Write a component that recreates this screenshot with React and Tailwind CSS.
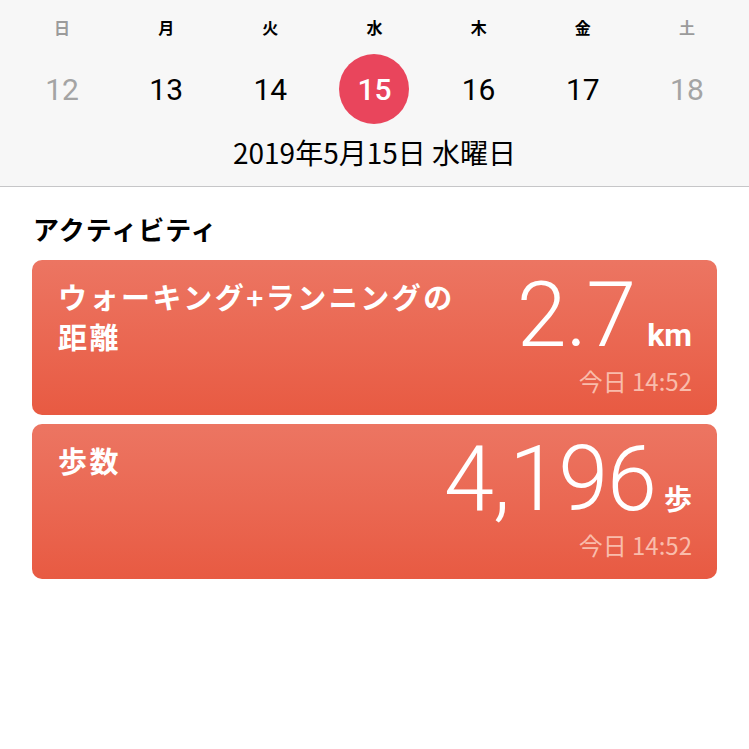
import * as React from 'react';

const DAYS = [
  { w: '日', d: '12', muted: true },
  { w: '月', d: '13' },
  { w: '火', d: '14' },
  { w: '水', d: '15', today: true },
  { w: '木', d: '16' },
  { w: '金', d: '17' },
  { w: '土', d: '18', muted: true },
];

const JP = { fontFamily: '"Noto Sans CJK JP", "Noto Sans", sans-serif' };
const NUM = { fontFamily: 'Roboto, "Noto Sans CJK JP", sans-serif' };

function Card({ title, value, unit, unitJp }) {
  return (
    <div className="rounded-[10px] bg-gradient-to-b from-[#ec7562] to-[#e85a42] h-[155px] pl-[26px] pr-[25px] pt-[16px] flex justify-between">
      <div className="text-white font-bold text-[29px] leading-[40px] tracking-[2.5px]" style={JP}>
        {title.map((line) => (
          <div key={line}>{line}</div>
        ))}
      </div>
      <div className="flex flex-col items-end mt-[-5px]">
        <div className="flex items-baseline text-white h-[90px]">
          <span className="text-[90px] font-light leading-[90px] tracking-[-1px]" style={NUM}>
            {value}
          </span>
          <span
            className={unitJp ? 'text-[28px] font-bold ml-[8px]' : 'text-[32px] font-bold ml-[12px]'}
            style={unitJp ? JP : NUM}
          >
            {unit}
          </span>
        </div>
        <div className="text-[24px] leading-[28px] text-[#f9bcab] mt-[6px]" style={JP}>
          今日 14:52
        </div>
      </div>
    </div>
  );
}

export default function App() {
  return (
    <div className="w-[749px] h-[749px] bg-white overflow-hidden" style={JP}>
      <div className="bg-[#f7f7f7] border-b border-[#c6c6c8] h-[187px] px-[10px]">
        <div className="grid grid-cols-7 pt-[15px]">
          {DAYS.map((x) => (
            <div key={x.w} className="flex flex-col items-center">
              <div className={'text-[16px] font-bold leading-[24px] ' + (x.muted ? 'text-[#9b9b9b]' : 'text-black')}>
                {x.w}
              </div>
              <div className="h-[70px] w-[70px] mt-[15px] flex items-center justify-center">
                {x.today ? (
                  <div className="h-[70px] w-[70px] rounded-full bg-[#e9455c] flex items-center justify-center text-white text-[30px] font-medium" style={NUM}>
                    {x.d}
                  </div>
                ) : (
                  <span className={'text-[30px] ' + (x.muted ? 'text-[#a4a4a4]' : 'text-black')} style={NUM}>
                    {x.d}
                  </span>
                )}
              </div>
            </div>
          ))}
        </div>
        <div className="text-center text-[28px] text-black leading-[36px] mt-[10px]">
          2019年5月15日 水曜日
        </div>
      </div>

      <div className="px-[32px]">
        <div className="text-[26px] font-bold text-black pt-[24px] leading-[36px] pl-[1px] tracking-[1px]">アクティビティ</div>
        <div className="mt-[13px] flex flex-col gap-[9px]">
          <Card title={['ウォーキング+ランニングの', '距離']} value="2.7" unit="km" />
          <Card title={['歩数']} value="4,196" unit="歩" unitJp />
        </div>
      </div>
    </div>
  );
}
